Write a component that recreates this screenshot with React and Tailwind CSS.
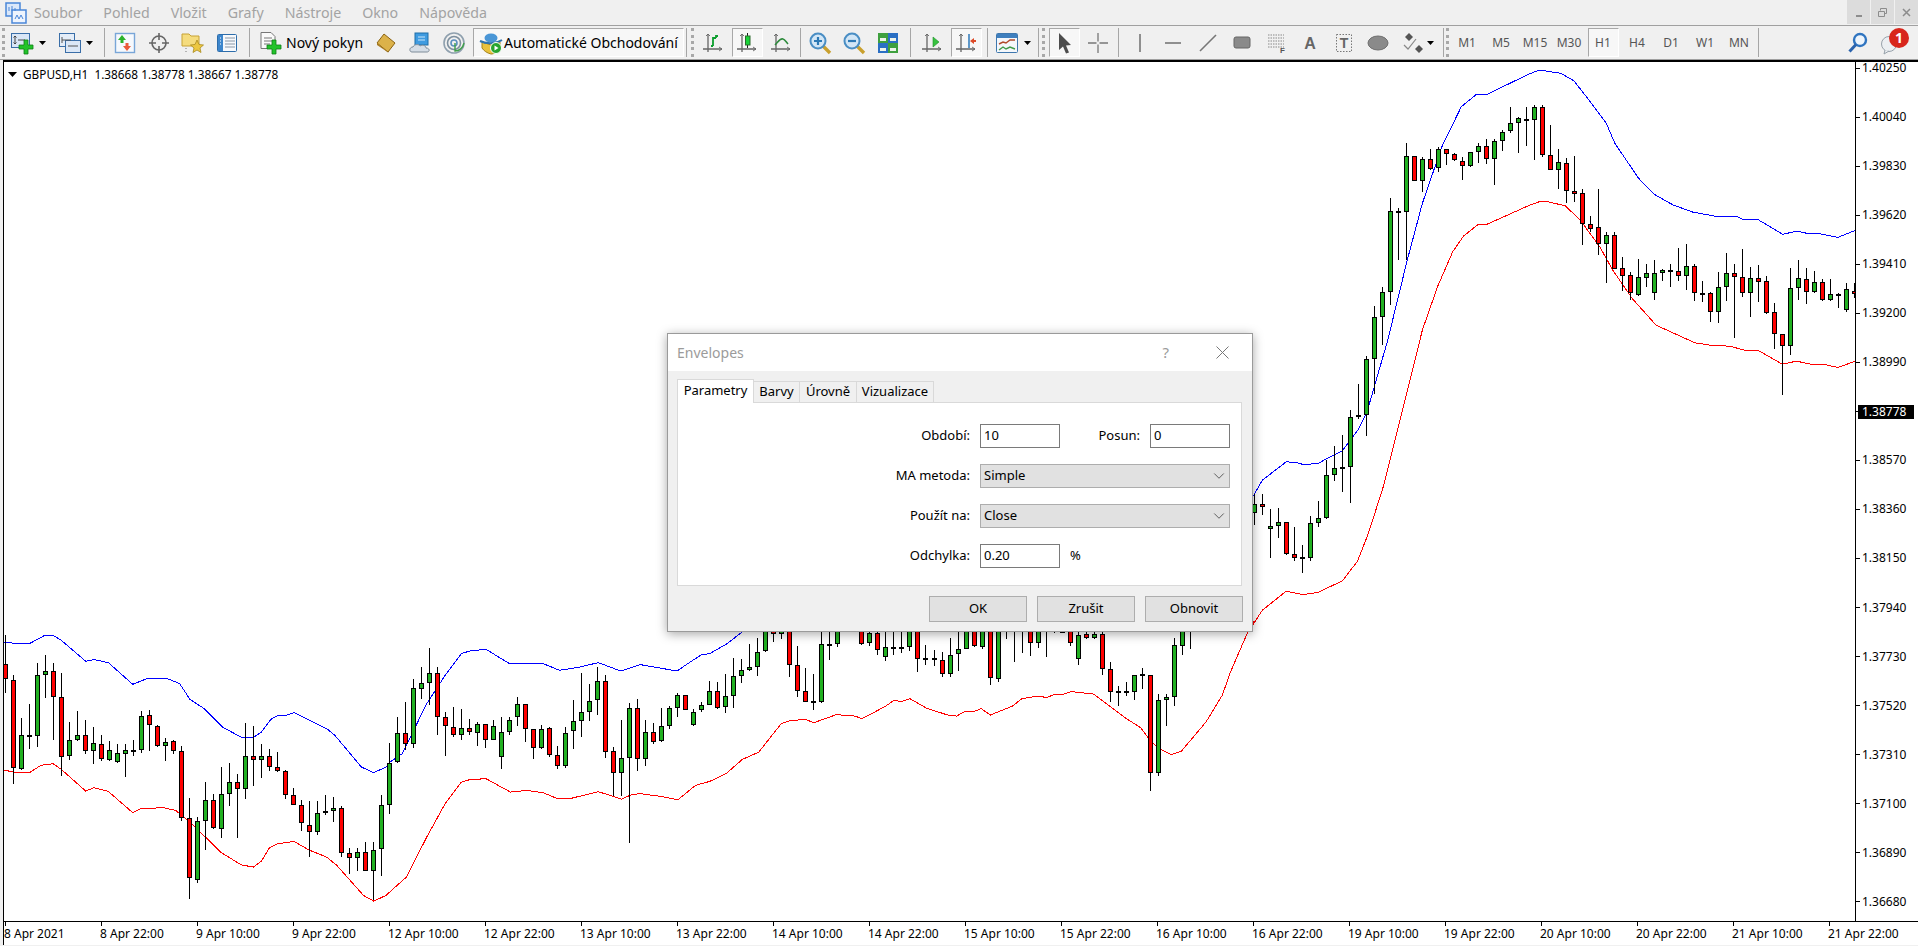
import React from "react";
import { ChevronDown } from "lucide-react";

const FONT = "font-['Noto_Sans','Liberation_Sans',sans-serif]";

// candles read off the chart: [high, top, bottom, low, colour], y values in 1/3 px from the base
const LEFT = [
  [45,132,175,218,"r"],[165,178,442,490,"r"],[293,343,446,450,"g"],[250,343,347,385,"g"],[128,163,347,380,"g"],[105,153,164,233,"g"],[128,151,230,360,"r"],[158,229,409,467,"r"],
  [305,358,407,418,"g"],[273,343,359,362,"g"],[300,343,391,401,"r"],[320,367,391,431,"g"],[345,370,415,422,"r"],[362,388,418,423,"g"],[372,397,425,428,"g"],[372,388,401,470,"g"],
  [360,388,392,407,"g"],[272,286,389,398,"g"],[270,283,313,392,"r"],[314,316,377,380,"r"],[354,364,377,422,"g"],[360,361,391,401,"r"],[378,391,593,601,"r"],[533,592,772,835,"r"],
  [591,601,778,788,"g"],[486,538,601,690,"g"],[521,538,623,625,"r"],[440,520,625,653,"g"],[427,484,520,557,"g"],[462,484,505,653,"r"],[309,406,505,536,"g"],[318,406,418,497,"r"],
  [372,406,418,473,"g"],[387,406,440,452,"r"],[396,439,452,456,"r"],[450,451,523,536,"r"],[503,523,553,553,"r"],[540,553,607,633,"r"],[543,613,635,711,"r"],[543,577,635,645,"g"],
  [525,571,578,584,"g"],[530,562,572,605,"g"],[558,562,697,710,"r"],[684,697,712,761,"r"],[684,694,712,752,"g"],[666,694,751,751,"r"],[666,688,751,840,"g"],[525,553,685,767,"g"],
  [369,427,553,581,"g"],[291,337,425,427,"g"],[246,337,370,390,"r"],[175,202,370,383,"g"],[140,187,205,235,"g"],[84,157,187,255,"g"],[140,157,289,345,"r"],[276,289,316,407,"r"],
  [261,319,343,350,"r"],[267,322,343,358,"g"],[295,322,334,344,"r"],[304,310,337,378,"g"],[310,310,358,384,"r"],[300,316,358,358,"g"],[291,334,409,446,"g"],[289,298,334,345,"g"],
  [231,250,289,318,"g"],[250,250,325,365,"r"],[325,325,382,416,"r"],[313,325,382,385,"g"],[320,322,403,409,"r"],[378,403,436,446,"r"],[320,337,436,442,"g"],[240,301,331,386,"g"],
  [159,274,301,351,"g"],[192,241,274,302,"g"],[140,181,238,283,"g"],[163,181,394,412,"r"],[379,391,457,528,"r"],[300,412,457,528,"g"],[247,262,412,668,"g"],[235,262,415,452,"r"],
  [300,334,415,437,"g"],[309,334,364,371,"r"],[262,316,362,365,"g"],[258,262,316,326,"g"],[219,223,263,290,"g"],[223,223,268,268,"r"],[265,274,314,316,"g"],[245,253,270,275,"g"],
  [183,211,254,255,"g"],[186,211,263,266,"r"],[162,226,260,278,"g"],[114,166,226,264,"g"],[117,148,166,188,"g"],[70,139,149,151,"g"],[52,94,139,167,"g"],[0,0,92,95,"g"],
  [0,0,40,66,"r"],[0,0,40,55,"g"],[0,0,133,170,"r"],[78,133,211,230,"r"],[144,211,244,245,"r"],[162,243,247,269,"g"],[0,70,245,248,"g"],[0,70,72,118,"g"],
  [0,0,70,80,"g"],[0,0,0,0,"g"],[0,0,35,36,"g"],[0,0,71,74,"r"],[0,38,67,77,"g"],[0,38,90,104,"r"],[0,80,109,122,"g"],[0,79,85,104,"r"],
  [0,79,83,98,"g"],[0,0,79,92,"g"],[0,0,115,155,"r"],[75,112,116,133,"g"],[90,112,119,137,"r"],[96,118,160,170,"r"],[54,103,160,170,"g"],[0,86,102,152,"g"],
  [0,0,85,85,"g"],[0,0,76,79,"r"],[0,0,79,86,"g"],[0,0,173,194,"r"],[0,0,176,185,"g"],[0,0,0,57,"g"],[0,0,0,125,"g"],[0,0,0,98,"g"],
  [0,0,67,107,"r"],[0,0,67,83,"g"],[0,0,0,110,"g"],[0,0,36,37,"g"],[0,0,38,39,"g"],[0,0,67,77,"r"],[0,43,115,134,"g"],[0,40,53,55,"r"],
  [0,40,53,55,"g"],[0,40,145,164,"r"],[126,145,215,245,"r"],[198,211,215,258,"g"],[185,211,215,228,"g"],[163,163,215,240,"g"],[144,160,163,207,"g"],[163,163,458,512,"r"],
  [222,238,458,467,"g"],[222,229,238,318,"g"],[53,73,229,258,"g"],[0,0,76,105,"g"],[0,0,0,85,"g"],
];
const GAP = 7; // i149..i155 sit behind the dialog
const LOWER = [
  [340,370,397,433,"g"],[342,370,380,405,"r"],[387,436,445,533,"g"],[384,424,436,473,"g"],[424,424,521,524,"r"],[441,520,532,542,"r"],[495,529,535,578,"g"],[408,427,532,542,"g"],
  [363,412,427,440,"g"],[238,283,412,416,"g"],[198,262,283,302,"g"],[165,260,264,335,"g"],[90,109,260,368,"g"],
];
const RIGHT = [
  [972,1063,1069,1075,"g"],[888,898,1063,1127,"g"],[738,772,898,1000,"g"],[682,697,772,855,"g"],[414,453,697,735,"g"],[445,453,455,600,"g"],[249,289,457,600,"g"],[289,289,364,364,"r"],
  [292,298,364,395,"g"],[267,298,326,330,"r"],[262,268,325,335,"g"],[268,268,283,315,"r"],[280,283,299,302,"r"],[292,304,319,360,"r"],[277,277,319,320,"g"],[250,259,277,308,"g"],
  [237,259,298,311,"r"],[238,244,298,375,"g"],[211,217,244,272,"g"],[140,190,214,220,"g"],[172,175,190,278,"g"],[140,178,181,258,"g"],[136,142,181,300,"g"],[136,142,286,292,"r"],
  [195,286,329,331,"r"],[267,307,329,388,"g"],[295,310,394,428,"r"],[288,394,401,425,"r"],[388,400,493,555,"r"],[469,493,506,515,"r"],[387,502,551,585,"r"],[515,525,551,668,"g"],
  [516,525,626,628,"r"],[591,625,647,692,"r"],[636,646,700,720,"r"],[598,652,704,708,"g"],[612,640,653,680,"g"],[601,640,700,719,"g"],[627,630,640,662,"g"],[612,631,635,680,"g"],
  [564,634,647,664,"r"],[552,618,647,690,"g"],[613,618,700,723,"r"],[663,699,702,725,"g"],[695,700,757,785,"r"],[636,682,757,790,"g"],[578,640,682,722,"g"],[612,640,652,833,"r"],
  [567,652,700,712,"r"],[620,655,700,770,"g"],[615,655,665,725,"r"],[648,664,759,761,"r"],[730,757,823,868,"r"],[823,823,859,1003,"r"],[625,685,859,886,"g"],[600,655,685,720,"g"],
  [625,658,697,733,"r"],[633,667,697,700,"g"],[658,667,721,722,"r"],[658,703,721,722,"g"],[700,701,704,745,"g"],[668,688,751,755,"g"],[668,694,703,715,"r"],
];

const toCandles = (rows, base, start) =>
  rows.map((r, n) => ({
    x: 5 + 8 * (start + n),
    hi: base + r[0] / 3,
    top: base + r[1] / 3,
    bot: base + r[2] / 3,
    lo: base + r[3] / 3,
    up: r[4] === "g",
  }));

const CANDLES = [
  ...toCandles(LEFT, 620, 0),
  ...toCandles(LOWER, 380, LEFT.length + GAP),
  ...toCandles(RIGHT, 60, LEFT.length + GAP + LOWER.length),
];

const pts = (x0, w, y0, list) =>
  list.map(([dx, dy]) => `${(x0 + (dx * w) / 1568).toFixed(1)},${(y0 + dy / 3).toFixed(1)}`).join(" ");

const BLUE = [
  pts(0, 640, 620, [[-20,65],[10,65],[40,70],[72,70],[110,45],[130,45],[150,60],[210,123],[230,118],[265,127],[325,192],[360,175],[410,175],[440,190],[465,237],[500,265],[545,320],[590,350],[620,352],[640,335],[665,295],[680,286],[700,285],[720,277],[755,298],[800,325],[820,345],[885,440],[915,457],[945,440],[955,425],[985,400],[1045,250],[1090,165],[1130,100],[1150,92],[1190,87],[1245,128],[1330,130],[1370,150],[1420,140],[1465,127],[1520,152],[1568,133]]),
  pts(640, 640, 620, [[90,152],[110,135],[150,103],[170,100],[210,72],[255,30]]),
  pts(1240, 678, 380, [[30,345],[50,300],[105,245],[125,246],[145,253],[180,250],[195,238],[235,212],[272,148],[290,100]]),
  pts(1240, 678, 60, [[300,1020],[340,840],[385,600],[420,430],[465,260],[510,140],[545,103],[570,103],[665,43],[690,30],[740,40],[770,62],[805,120],[845,190],[865,250],[920,355],[955,402],[1000,435],[1045,456],[1095,468],[1145,468],[1160,478],[1195,478],[1253,523],[1285,513],[1310,520],[1335,520],[1380,532],[1417,513],[1430,508]]),
].join(" ");

const RED = [
  pts(0, 640, 620, [[-20,449],[10,449],[40,457],[72,457],[100,435],[130,430],[150,447],[210,512],[230,502],[265,513],[325,577],[345,565],[400,562],[430,570],[470,610],[540,695],[590,733],[620,740],[640,722],[660,682],[680,670],[720,663],[755,688],[800,710],[825,735],[890,825],[915,842],[945,825],[995,770],[1045,650],[1090,550],[1130,485],[1150,478],[1190,475],[1250,515],[1290,510],[1330,517],[1365,535],[1395,535],[1465,514],[1522,536],[1548,522],[1568,520]]),
  pts(640, 640, 620, [[50,528],[92,538],[135,495],[170,483],[210,460],[250,417],[290,395],[345,310],[370,300],[405,298],[425,307],[480,283],[525,287],[543,295],[600,258],[620,241],[640,243],[660,235],[700,263],[755,285],[775,287],[795,273],[820,272],[835,265],[857,284],[910,258],[935,235],[975,227],[995,232],[1010,224],[1035,222],[1055,214],[1110,221],[1190,295],[1225,322],[1245,355],[1270,385],[1300,403],[1325,392],[1385,305],[1425,225],[1445,155],[1500,0]]),
  pts(1240, 678, 380, [[30,730],[50,690],[105,633],[145,643],[180,636],[205,620],[235,602],[270,543],[295,460],[330,318]]),
  pts(1240, 678, 60, [[380,1020],[420,810],[455,680],[490,575],[515,528],[550,492],[565,495],[665,437],[690,425],[710,425],[750,437],[785,480],[830,560],[860,630],[905,715],[960,795],[1050,848],[1090,856],[1130,858],[1165,870],[1198,872],[1252,912],[1285,903],[1320,913],[1350,913],[1380,922],[1417,905],[1430,900]]),
].join(" ");

const PRICES = ["1.40250","1.40040","1.39830","1.39620","1.39410","1.39200","1.38990","1.38780","1.38570","1.38360","1.38150","1.37940","1.37730","1.37520","1.37310","1.37100","1.36890","1.36680"];
const TIMES = ["8 Apr 2021","8 Apr 22:00","9 Apr 10:00","9 Apr 22:00","12 Apr 10:00","12 Apr 22:00","13 Apr 10:00","13 Apr 22:00","14 Apr 10:00","14 Apr 22:00","15 Apr 10:00","15 Apr 22:00","16 Apr 10:00","16 Apr 22:00","19 Apr 10:00","19 Apr 22:00","20 Apr 10:00","20 Apr 22:00","21 Apr 10:00","21 Apr 22:00"];

const Ico = ({ children }) => (
  <svg width="24" height="24" viewBox="0 0 24 24" fill="none" className="shrink-0">
    {children}
  </svg>
);

const Plus = ({ x = 0, y = 0 }) => (
  <path transform={`translate(${x} ${y})`} d="M13 8h4v5h5v4h-5v5h-4v-5H8v-4h5z" fill="#22c32a" stroke="#0f7d18" strokeWidth="0.8" />
);
const Axes = () => (
  <g stroke="#666" strokeWidth="1.3">
    <path d="M7 3v18M2 18h19" />
    <path d="M5 5l2-2 2 2M18 16l3 2-3 2" strokeWidth="0.9" />
  </g>
);

const Icons = {
  logo: (
    <svg width="22" height="22" viewBox="0 0 22 22" fill="none">
      <rect x="1" y="1" width="14" height="13" fill="#dbe8fa" stroke="#4a86d8" strokeWidth="1.5" />
      <rect x="7" y="8" width="14" height="13" fill="#eef4fd" stroke="#4a86d8" strokeWidth="1.5" />
      <path d="M4 9V5M7 9V4M10 9V6M10 17l2-4 2 4 2-4 2 4" stroke="#4a86d8" />
    </svg>
  ),
  newChart: (
    <Ico>
      <rect x="1.5" y="2.5" width="18" height="14" fill="#d9e6f6" stroke="#3a6ea8" />
      <path d="M5 5v8M3.5 6.5L5 5l1.5 1.5M3.5 11.5L5 13l1.500-1.500M8 9h7" stroke="#444" />
      <Plus x="1" y="1" />
    </Ico>
  ),
  profile: (
    <Ico>
      <rect x="1.5" y="2.5" width="15" height="13" fill="#e4edf8" stroke="#3a6ea8" />
      <rect x="7.5" y="9.5" width="15" height="12" fill="#dbe7f6" stroke="#3a6ea8" />
      <path d="M4 6v6M4 9h9M10 15h10" stroke="#555" />
    </Ico>
  ),
  market: (
    <Ico>
      <rect x="2.5" y="2.5" width="19" height="19" fill="#f6f9fd" stroke="#79a6d8" strokeWidth="1.4" />
      <path d="M9 4l4 5h-2.5v3h-3V9H5z" fill="#2bb32b" />
      <path d="M14 20l-4-5h2.5v-3h3v3H18z" fill="#ea5a3a" />
    </Ico>
  ),
  navigator: (
    <Ico>
      <circle cx="12" cy="12" r="7" stroke="#666" strokeWidth="1.6" />
      <path d="M12 2v7M12 15v7M2 12h7M15 12h7" stroke="#666" strokeWidth="1.6" />
    </Ico>
  ),
  favorites: (
    <Ico>
      <path d="M1 3h7l2 2h8v10H1z" fill="#f5dc7e" stroke="#c7a235" />
      <path d="M16 9l2 4.5 4.5.5-3.5 3 1 4.5-4-2.500-4 2.500 1-4.500-3.500-3 4.500-.5z" fill="#ecc741" stroke="#a98a1e" strokeWidth="0.8" />
      <path d="M5 17v1M5 20v1" stroke="#777" />
    </Ico>
  ),
  terminal: (
    <Ico>
      <rect x="2.5" y="3.5" width="19" height="17" rx="1" fill="#f7f9fc" stroke="#2d6dab" />
      <rect x="3" y="4" width="5" height="16" fill="#3d86cc" />
      <path d="M10 7h10M10 10h10M10 13h10M10 16h10" stroke="#8a97a6" />
      <path d="M5 7h1M5 10h1M5 13h1" stroke="#fff" />
    </Ico>
  ),
  order: (
    <Ico>
      <path d="M3 1.5h10l4 4v12H3z" fill="#fafafa" stroke="#777" />
      <path d="M6 7h8M6 10h8M6 13h6" stroke="#777" />
      <Plus x="1" y="1" />
    </Ico>
  ),
  editor: (
    <Ico>
      <path d="M10 3l11 9-7 9-11-9z" fill="#dcb24a" stroke="#8b6312" />
      <path d="M3 12l11 9 1 1-12-8z" fill="#a87b20" />
    </Ico>
  ),
  tester: (
    <Ico>
      <rect x="7" y="2" width="13" height="12" fill="#3f9be0" stroke="#1f6ea8" />
      <path d="M10 6h7M10 9h7" stroke="#cbe6fa" />
      <path d="M4 21c-3 0-3-5 1-5 1-3 6-3 7-1 3-2 6 0 6 2 4 0 4 4 1 4z" fill="#d5dde6" stroke="#7f8c99" />
    </Ico>
  ),
  signal: (
    <Ico>
      <circle cx="12" cy="12" r="10" stroke="#8fa0ae" strokeWidth="1.6" />
      <circle cx="12" cy="12" r="6.5" stroke="#7d8f9e" strokeWidth="1.6" />
      <circle cx="12" cy="12" r="3" stroke="#5b8fbf" strokeWidth="1.6" />
      <path d="M13 12v8c4 0 8-3 9-8" stroke="#3f9f4a" strokeWidth="1.4" />
    </Ico>
  ),
  robot: (
    <Ico>
      <path d="M3 11l9 3 9-3v6c-2 4-6 6-9 6-4-1-7-3-9-6z" fill="#e9c23e" stroke="#a5831b" />
      <ellipse cx="12" cy="7" rx="6.5" ry="4.5" fill="#4a96d6" />
      <path d="M1 10c6 3 16 3 22-1" stroke="#2e73ae" strokeWidth="2" />
      <circle cx="17" cy="17" r="5.5" fill="#29a52f" stroke="#fff" />
      <path d="M15.5 14.5l4 2.500-4 2.500z" fill="#fff" />
    </Ico>
  ),
  bars: (
    <Ico>
      <Axes />
      <path d="M12 15V7h3M12 15h-2M15 7V5h2" stroke="#0d9e2e" strokeWidth="1.8" />
    </Ico>
  ),
  candles: (
    <Ico>
      <Axes />
      <path d="M12.5 2v15" stroke="#222" />
      <rect x="10.5" y="5" width="4.5" height="9" fill="#18d438" stroke="#2c6a2c" />
    </Ico>
  ),
  line: (
    <Ico>
      <Axes />
      <path d="M6 14c3-3 5-7 8-6 2 .5 3 3 5 5" stroke="#2e8b3d" strokeWidth="1.6" />
    </Ico>
  ),
  zoomIn: (
    <Ico>
      <path d="M15 15l7 7" stroke="#c9a02e" strokeWidth="3.4" />
      <circle cx="10" cy="10" r="7.5" fill="#d2e6f6" stroke="#4a8ec4" strokeWidth="2" />
      <path d="M6 10h8M10 6v8" stroke="#2c79b5" strokeWidth="2.2" />
    </Ico>
  ),
  zoomOut: (
    <Ico>
      <path d="M15 15l7 7" stroke="#c9a02e" strokeWidth="3.4" />
      <circle cx="10" cy="10" r="7.5" fill="#d2e6f6" stroke="#4a8ec4" strokeWidth="2" />
      <path d="M6 10h8" stroke="#2c79b5" strokeWidth="2.2" />
    </Ico>
  ),
  tile: (
    <Ico>
      <rect x="2" y="2" width="10" height="10" fill="#3ea03e" />
      <rect x="12" y="2" width="10" height="10" fill="#2a6fc4" />
      <rect x="2" y="12" width="10" height="10" fill="#2a6fc4" />
      <rect x="12" y="12" width="10" height="10" fill="#3ea03e" />
      <path d="M4 7h6v3H4zM14 7h6v3h-6zM4 17h6v3H4zM14 17h6v3h-6z" fill="#eef4ea" />
    </Ico>
  ),
  scroll: (
    <Ico>
      <Axes />
      <path d="M13 6l6 5-6 5z" fill="#37c23f" stroke="#1f8f2a" strokeWidth="0.6" />
    </Ico>
  ),
  shift: (
    <Ico>
      <Axes />
      <path d="M15 3v14" stroke="#1f70b5" strokeWidth="1.4" />
      <path d="M16 10l4-3v2h2v2h-2v2z" fill="#dc4a28" />
    </Ico>
  ),
  indicators: (
    <Ico>
      <rect x="1.5" y="2.5" width="21" height="19" rx="1" fill="#f4f7fb" stroke="#3e77ae" />
      <rect x="2" y="3" width="20" height="4" fill="#3f7fbe" />
      <path d="M4 13l4-2 3 1 4-3 5 0" stroke="#b04a2a" strokeWidth="1.4" />
      <path d="M4 19l4-3 3 2 4-2 5 2" stroke="#3f9b4a" strokeWidth="1.4" />
    </Ico>
  ),
  cursor: (
    <Ico>
      <path d="M7 2l12 12-5 .5 3 7-3 1-3-7-4 3.5z" fill="#4d4d4d" />
    </Ico>
  ),
  cross: (
    <Ico>
      <path d="M12 2v20M2 12h20" stroke="#777" strokeWidth="1.3" />
      <rect x="10.5" y="10.5" width="3" height="3" fill="#f0f0f0" />
    </Ico>
  ),
  vline: (
    <Ico>
      <path d="M12 3v18" stroke="#777" strokeWidth="1.6" />
    </Ico>
  ),
  hline: (
    <Ico>
      <path d="M3 12h16" stroke="#777" strokeWidth="1.6" />
    </Ico>
  ),
  diag: (
    <Ico>
      <path d="M4 20L20 4" stroke="#777" strokeWidth="1.6" />
    </Ico>
  ),
  rect: (
    <Ico>
      <rect x="4" y="6" width="16" height="11" rx="2" fill="#8a8a8a" stroke="#666" />
    </Ico>
  ),
  fibo: (
    <Ico>
      <path d="M4 4h16M4 7h16M4 10h16M4 13h16M4 16h16" stroke="#888" strokeDasharray="1.5 1" />
      <text x="16" y="22" fontSize="8" fontWeight="700" fill="#555" fontFamily="Liberation Sans">F</text>
    </Ico>
  ),
  letter: (
    <Ico>
      <text x="12" y="18" textAnchor="middle" fontSize="16" fontWeight="700" fill="#666" fontFamily="Liberation Sans">A</text>
    </Ico>
  ),
  label: (
    <Ico>
      <rect x="4.5" y="3.5" width="15" height="17" stroke="#777" strokeDasharray="1.5 1.5" />
      <text x="12" y="17" textAnchor="middle" fontSize="14" fontWeight="700" fill="#666" fontFamily="Liberation Sans">T</text>
    </Ico>
  ),
  ellipse: (
    <Ico>
      <ellipse cx="12" cy="12" rx="10" ry="7" fill="#8a8a8a" stroke="#6e6e6e" />
    </Ico>
  ),
  arrows: (
    <Ico>
      <path d="M4 6l4-4 4 4-4 4z" fill="#555" />
      <path d="M14 18l4-4 4 4-4 4z" fill="#555" />
      <path d="M3 14l4 4 8-10" stroke="#888" strokeWidth="1.2" />
    </Ico>
  ),
  search: (
    <Ico>
      <circle cx="14" cy="9" r="6" fill="#eef5fc" stroke="#2f74c0" strokeWidth="2.4" />
      <path d="M10 13.5L3.5 20.5" stroke="#2a63ad" strokeWidth="3" />
    </Ico>
  ),
  bubble: (
    <Ico>
      <circle cx="11" cy="13" r="7.5" fill="#eceff2" stroke="#98a2ab" />
      <path d="M7 19l-1 4 5-3" fill="#eceff2" stroke="#98a2ab" />
    </Ico>
  ),
};

const Grip = () => <div className="h-[29px] w-0 shrink-0 border-l-[3px] border-dotted border-[#a8a8a8]" />;
const Sep = ({ className = "" }) => <div className={`h-[29px] w-px shrink-0 bg-[#a6a6a6] ${className}`} />;
const Caret = ({ className = "" }) => (
  <svg width="7" height="4" viewBox="0 0 7 4" className={`shrink-0 ${className}`}>
    <path d="M0 0h7L3.5 4z" fill="#000" />
  </svg>
);

const Slot = ({ active, children }) => (
  <div className="flex w-[34px] shrink-0 justify-center">
    <div
      className={`flex h-[29px] w-[31px] items-center justify-center ${
        active ? "border border-[#a8a8a8] border-b-white border-r-white bg-[#f7f7f7]" : ""
      }`}
    >
      {children}
    </div>
  </div>
);

const MenuBar = () => (
  <div className="flex h-[26px] shrink-0 items-center border-b border-[#a0a0a0] pl-[5px] text-[14.2px] text-[#a3a3a3]">
    <div className="flex w-[29px] shrink-0 items-center">{Icons.logo}</div>
    <div className="flex gap-[21px]">
      {["Soubor", "Pohled", "Vložit", "Grafy", "Nástroje", "Okno", "Nápověda"].map((m) => (
        <span key={m}>{m}</span>
      ))}
    </div>
    <div className="ml-auto flex h-[24px] gap-px self-start">
      <div className="flex w-[23px] items-end justify-center bg-[#dcdcdc] pb-[7px]">
        <div className="h-[2px] w-[6px] bg-[#8c8c8c]" />
      </div>
      <div className="flex w-[23px] items-center justify-center bg-[#dcdcdc]">
        <svg width="9" height="9" viewBox="0 0 9 9" fill="none" stroke="#8c8c8c">
          <path d="M2.5 2.5v-2h6v5h-2M.5 3.5h6v5h-6z" />
        </svg>
      </div>
      <div className="flex w-[23px] items-center justify-center bg-[#dcdcdc]">
        <svg width="9" height="9" viewBox="0 0 9 9" fill="none" stroke="#8c8c8c" strokeWidth="1.5">
          <path d="M1 1l7 7M8 1L1 8" />
        </svg>
      </div>
    </div>
  </div>
);

const Toolbar = () => (
  <div className="flex h-[34px] shrink-0 items-center border-b border-[#a0a0a0] pl-[2px] text-[14px] text-black">
    <Grip />
    <div className="ml-[5px]">{Icons.newChart}</div>
    <Caret className="ml-[5px]" />
    <div className="ml-[12px]">{Icons.profile}</div>
    <Caret className="ml-[4px]" />
    <Sep className="ml-[11px]" />
    <div className="ml-[3px] flex">
      <Slot>{Icons.market}</Slot>
      <Slot>{Icons.navigator}</Slot>
      <Slot>{Icons.favorites}</Slot>
      <Slot>{Icons.terminal}</Slot>
    </div>
    <Sep className="ml-[5px]" />
    <div className="ml-[8px]">{Icons.order}</div>
    <span className="ml-[4px] w-[77px] shrink-0 whitespace-nowrap">Nový pokyn</span>
    <div className="ml-[6px] flex">
      <Slot>{Icons.editor}</Slot>
      <Slot>{Icons.tester}</Slot>
      <Slot>{Icons.signal}</Slot>
    </div>
    <div className="ml-[2px] flex h-[29px] w-[211px] shrink-0 items-center whitespace-nowrap border border-[#a8a8a8] border-b-white border-r-white bg-[#f7f7f7] pl-[5px]">
      {Icons.robot}
      <span className="ml-[1px]">Automatické Obchodování</span>
    </div>
    <Sep className="ml-[2px]" />
    <div className="ml-[4px]"><Grip /></div>
    <div className="ml-[2px] flex">
      <Slot>{Icons.bars}</Slot>
      <Slot active>{Icons.candles}</Slot>
      <Slot>{Icons.line}</Slot>
    </div>
    <Sep className="ml-[2px]" />
    <div className="ml-[2px] flex">
      <Slot>{Icons.zoomIn}</Slot>
      <Slot>{Icons.zoomOut}</Slot>
      <Slot>{Icons.tile}</Slot>
    </div>
    <Sep className="ml-[5px]" />
    <div className="ml-[4px] flex">
      <Slot>{Icons.scroll}</Slot>
      <Slot active>{Icons.shift}</Slot>
    </div>
    <Sep className="ml-[4px]" />
    <div className="ml-[7px]">{Icons.indicators}</div>
    <Caret className="ml-[5px]" />
    <Sep className="ml-[7px]" />
    <div className="ml-[3px]"><Grip /></div>
    <div className="ml-[2px] flex">
      <Slot active>{Icons.cursor}</Slot>
      <Slot>{Icons.cross}</Slot>
    </div>
    <Sep className="ml-[3px]" />
    <div className="ml-[4px] flex">
      <Slot>{Icons.vline}</Slot>
      <Slot>{Icons.hline}</Slot>
      <Slot>{Icons.diag}</Slot>
      <Slot>{Icons.rect}</Slot>
      <Slot>{Icons.fibo}</Slot>
      <Slot>{Icons.letter}</Slot>
      <Slot>{Icons.label}</Slot>
      <Slot>{Icons.ellipse}</Slot>
    </div>
    <div className="ml-[6px]">{Icons.arrows}</div>
    <Caret className="ml-[2px]" />
    <Sep className="ml-[9px]" />
    <div className="ml-[2px]"><Grip /></div>
    <div className="ml-[1px] flex text-[12px] text-[#555]">
      {["M1", "M5", "M15", "M30", "H1", "H4", "D1", "W1", "MN"].map((t) => (
        <Slot key={t} active={t === "H1"}>{t}</Slot>
      ))}
    </div>
    <Sep className="ml-[2px]" />
    <div className="ml-auto mr-[16px] flex items-center gap-[8px]">
      {Icons.search}
      <div className="relative">
        {Icons.bubble}
        <div className="absolute -right-[7px] -top-[3px] flex h-[20px] w-[20px] items-center justify-center rounded-full bg-[#d8261c] text-[14px] font-bold text-white">
          1
        </div>
      </div>
    </div>
  </div>
);

const Chart = () => (
  <svg className="block h-full w-full" viewBox="4 62 1850 859" preserveAspectRatio="none">
    <polyline points={BLUE} fill="none" stroke="#0000ff" strokeWidth="1" shapeRendering="crispEdges" />
    <polyline points={RED} fill="none" stroke="#ff0000" strokeWidth="1" shapeRendering="crispEdges" />
    {CANDLES.map((c) => (
      <g key={c.x} shapeRendering="crispEdges">
        <line x1={c.x + 0.5} x2={c.x + 0.5} y1={c.hi} y2={c.lo} stroke="#000" />
        {c.bot > c.top && (
          <rect
            x={c.x - 1.5}
            y={c.top + 0.5}
            width={4}
            height={Math.max(c.bot - c.top - 1, 1)}
            fill={c.up ? "#21b021" : "#ff0000"}
            stroke="#000"
          />
        )}
      </g>
    ))}
  </svg>
);

const PriceAxis = () => (
  <div className="relative w-[63px] shrink-0 border-l border-black">
    <div className="-mt-px flex flex-col gap-[35.06px]">
      {PRICES.map((p) => (
        <div key={p} className="flex h-[14px] items-center">
          <div className="h-px w-[4px] bg-black" />
          <span className="ml-[2px] leading-[14px]">{p}</span>
        </div>
      ))}
    </div>
    <div className="absolute left-[2px] top-[343px] flex h-[14px] w-[56px] items-center bg-black pl-[4px] text-white">
      1.38778
    </div>
  </div>
);

const TimeAxis = () => (
  <div className="flex h-[24px] shrink-0 overflow-hidden border-t border-black bg-white pl-[1px]">
    {TIMES.map((t) => (
      <div key={t} className="w-[96px] shrink-0">
        <div className="h-[4px] w-px bg-black" />
        <div className="-ml-[1px] whitespace-nowrap leading-[16px]">{t}</div>
      </div>
    ))}
  </div>
);

const Field = ({ value, w = "w-[80px]" }) => (
  <div className={`flex h-[24px] items-center border border-[#7a7a7a] bg-white pl-[3px] ${w}`}>{value}</div>
);
const Select = ({ value }) => (
  <div className="flex h-[24px] w-[250px] items-center justify-between border border-[#adadad] bg-[#e1e1e1] pl-[3px] pr-px">
    <span>{value}</span>
    <ChevronDown size={18} strokeWidth={1} className="text-[#333]" />
  </div>
);
const Row = ({ label, children }) => (
  <div className="flex h-[24px] items-center">
    <span className="w-[292px] text-right">{label}</span>
    <div className="ml-[10px] flex items-center">{children}</div>
  </div>
);
const Btn = ({ children }) => (
  <div className="flex h-[26px] w-[98px] items-center justify-center border border-[#adadad] bg-[#e1e1e1]">{children}</div>
);

const Dialog = () => (
  <div className="absolute left-[667px] top-[333px] flex h-[299px] w-[586px] flex-col border border-[#9a9a9a] bg-[#f0f0f0] text-[13px] text-black shadow-[0_2px_10px_rgba(0,0,0,0.35)]">
    <div className="flex h-[37px] shrink-0 items-center bg-white pl-[9px] pr-[23px] text-[14px] text-[#9b9b9b]">
      <span>Envelopes</span>
      <span className="ml-auto mr-[47px] text-[15px]">?</span>
      <svg width="13" height="13" viewBox="0 0 13 13" stroke="#777" fill="none">
        <path d="M.5.5l12 12M12.5.5l-12 12" />
      </svg>
    </div>
    <div className="flex flex-1 flex-col pl-[9px] pr-[10px] pt-[8px]">
      <div className="relative z-10 -mb-px flex h-[24px] items-end">
        <div className="flex h-[24px] w-[77px] items-start justify-center border border-b-0 border-[#d9d9d9] bg-white pt-[1px]">Parametry</div>
        <div className="flex h-[22px] w-[46px] items-center justify-center border border-l-0 border-[#d9d9d9]">Barvy</div>
        <div className="flex h-[22px] w-[57px] items-center justify-center border border-l-0 border-[#d9d9d9]">Úrovně</div>
        <div className="flex h-[22px] w-[77px] items-center justify-center border border-l-0 border-[#d9d9d9]">Vizualizace</div>
      </div>
      <div className="flex h-[184px] flex-col gap-[16px] border border-[#d9d9d9] bg-white pt-[21px]">
        <Row label="Období:">
          <Field value="10" />
          <span className="w-[80px] text-right">Posun:</span>
          <div className="ml-[10px]"><Field value="0" /></div>
        </Row>
        <Row label="MA metoda:"><Select value="Simple" /></Row>
        <Row label="Použít na:"><Select value="Close" /></Row>
        <Row label="Odchylka:">
          <Field value="0.20" />
          <span className="ml-[10px]">%</span>
        </Row>
      </div>
      <div className="-mr-px mt-[10px] flex justify-end gap-[10px]">
        <Btn>OK</Btn>
        <Btn>Zrušit</Btn>
        <Btn>Obnovit</Btn>
      </div>
    </div>
  </div>
);

export default function App() {
  return (
    <div className={`relative flex h-[946px] w-[1918px] flex-col overflow-hidden bg-[#f0f0f0] ${FONT}`}>
      <MenuBar />
      <Toolbar />
      <div className="flex flex-1 flex-col pb-px pl-[3px] text-[12px] text-black">
        <div className="flex min-h-0 flex-1 flex-col border-l border-t-2 border-l-black border-t-black bg-white">
          <div className="relative flex min-h-0 flex-1">
            <div className="min-w-0 flex-1">
              <Chart />
            </div>
            <PriceAxis />
            <div className="absolute left-[4px] top-[4px] flex items-center gap-[6px] whitespace-nowrap text-[11.8px]">
              <svg width="9" height="5" viewBox="0 0 9 5" className="shrink-0">
                <path d="M0 0h9L4.5 5z" fill="#000" />
              </svg>
              <span>GBPUSD,H1&nbsp;&nbsp;1.38668 1.38778 1.38667 1.38778</span>
            </div>
          </div>
          <TimeAxis />
        </div>
      </div>
      <Dialog />
    </div>
  );
}
